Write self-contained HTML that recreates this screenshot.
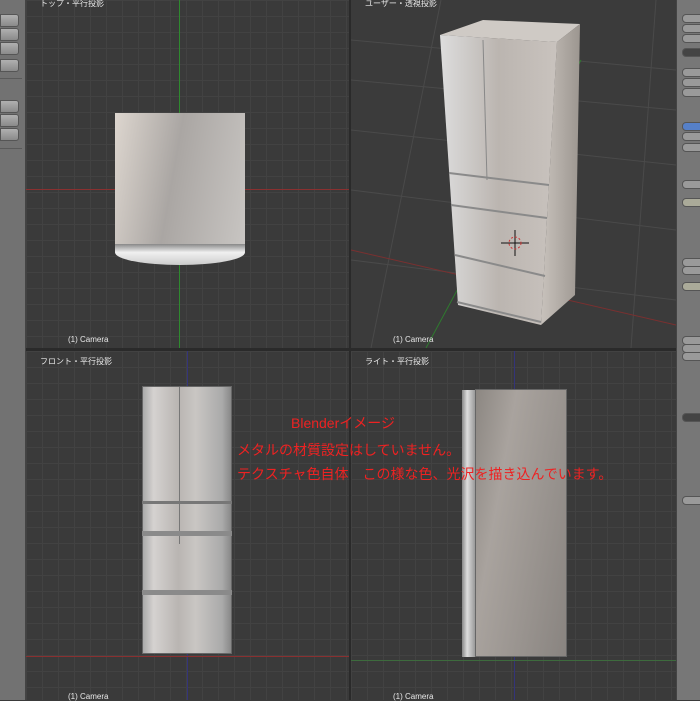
<!DOCTYPE html>
<html><head><meta charset="utf-8"><style>
*{margin:0;padding:0;box-sizing:border-box}
body{width:700px;height:700px;overflow:hidden;background:#3a3a3a;position:relative;font-family:"Liberation Sans","Noto Sans CJK JP",sans-serif}
.vp{position:absolute;background-color:#3a3a3a;background-image:linear-gradient(#424242 1px,transparent 1px),linear-gradient(90deg,#424242 1px,transparent 1px);background-size:16px 16px;overflow:hidden}
.lbl{position:absolute;color:#e8e8e8;font-size:8px}
.ln{position:absolute}
.red{position:absolute;color:#ee2222;font-size:14px;white-space:nowrap}
.btn{position:absolute;left:0;width:19px;height:13px;background:linear-gradient(#b0b0b0,#8a8a8a);border-radius:0 3px 3px 0;border:1px solid #555}
.rb{position:absolute;left:682px;width:20px;height:9px;background:#9a9a9a;border:1px solid #555;border-radius:4px 0 0 4px}
</style></head><body>
<div style="position:absolute;left:0;top:0;width:26px;height:700px;background:#727272;border-right:1px solid #444"></div>
<div class="btn" style="top:14px"></div><div class="btn" style="top:28px"></div><div class="btn" style="top:42px"></div><div class="btn" style="top:59px"></div>
<div class="btn" style="top:100px"></div><div class="btn" style="top:114px"></div><div class="btn" style="top:128px"></div>
<div style="position:absolute;left:0;top:78px;width:22px;height:1px;background:#5a5a5a"></div>
<div style="position:absolute;left:0;top:148px;width:22px;height:1px;background:#5a5a5a"></div>
<div class="vp" style="left:26px;top:0;width:323px;height:348px"></div>
<div class="vp" style="left:351px;top:0;width:325px;height:348px;background-image:none;background:#3b3b3b"></div>
<div class="vp" style="left:26px;top:351px;width:323px;height:349px"></div>
<div class="vp" style="left:351px;top:351px;width:325px;height:349px"></div>
<div style="position:absolute;left:349px;top:0;width:2px;height:700px;background:#2a2a2a"></div>
<div style="position:absolute;left:26px;top:348px;width:650px;height:3px;background:#2a2a2a"></div>
<div style="position:absolute;left:676px;top:0;width:24px;height:700px;background:#777;border-left:1px solid #444"></div>
<div class="rb" style="top:14px"></div><div class="rb" style="top:24px"></div><div class="rb" style="top:34px"></div><div class="rb" style="top:48px;background:#444"></div>
<div class="rb" style="top:68px"></div><div class="rb" style="top:78px"></div><div class="rb" style="top:88px"></div>
<div class="rb" style="top:122px;background:#5680c8"></div><div class="rb" style="top:132px"></div><div class="rb" style="top:143px"></div>
<div class="rb" style="top:180px"></div><div class="rb" style="top:198px;background:#aa9"></div>
<div class="rb" style="top:258px"></div><div class="rb" style="top:266px"></div><div class="rb" style="top:282px;background:#aa9"></div>
<div class="rb" style="top:336px"></div><div class="rb" style="top:344px"></div><div class="rb" style="top:352px"></div>
<div class="rb" style="top:413px;background:#444"></div><div class="rb" style="top:496px"></div>
<div class="ln" style="left:179px;top:0;width:1px;height:348px;background:#2f8a2f"></div>
<div class="ln" style="left:26px;top:189px;width:323px;height:1px;background:#8a3030"></div>
<div class="lbl" style="left:40px;top:-2px">トップ・平行投影</div>
<div style="position:absolute;left:115px;top:113px;width:130px;height:131px;background:linear-gradient(100deg,#ddd6cf,#aaa6a3 45%,#c8c5c2);"></div>
<div style="position:absolute;left:115px;top:244px;width:130px;height:21px;background:linear-gradient(#888,#f0f0f0 40%,#ccc);border-radius:0 0 50% 50%/0 0 60% 60%"></div>
<div class="lbl" style="left:68px;top:335px">(1) Camera</div>
<svg style="position:absolute;left:351px;top:0" width="325" height="348">
<defs>
<linearGradient id="g1" x1="0" x2="1"><stop offset="0" stop-color="#ddd"/><stop offset=".5" stop-color="#bbb5b0"/><stop offset="1" stop-color="#c9c3be"/></linearGradient>
<linearGradient id="g2" x1="0" x2="1"><stop offset="0" stop-color="#c8c2bc"/><stop offset="1" stop-color="#9c9690"/></linearGradient>
</defs>
<g stroke="#4a4a4a" stroke-width="1" fill="none">
<line x1="0" y1="40" x2="325" y2="70"/><line x1="0" y1="80" x2="325" y2="110"/><line x1="0" y1="130" x2="325" y2="165"/><line x1="0" y1="190" x2="325" y2="230"/><line x1="0" y1="260" x2="325" y2="300"/>
<line x1="20" y1="348" x2="90" y2="0"/><line x1="280" y1="348" x2="305" y2="0"/>
</g>
<line x1="75" y1="348" x2="230" y2="60" stroke="#2f7a2f"/>
<line x1="0" y1="250" x2="325" y2="325" stroke="#7a3030"/>
<polygon points="89,35 132,20 229,24 206,42" fill="#cfcac5"/>
<polygon points="206,42 229,24 224,295 190,325" fill="url(#g2)"/>
<polygon points="89,35 206,42 190,325 107,305" fill="url(#g1)"/>
<line x1="132" y1="40" x2="136" y2="180" stroke="#888"/>
<g stroke="#8a8a8a" stroke-width="2"><line x1="98" y1="173" x2="198" y2="185"/><line x1="100" y1="205" x2="196" y2="218"/><line x1="104" y1="255" x2="194" y2="276"/><line x1="106" y1="302" x2="190" y2="322"/></g>
<g stroke="#111" stroke-width="1"><line x1="164" y1="230" x2="164" y2="256"/><line x1="150" y1="243" x2="178" y2="243"/></g>
<circle cx="164" cy="243" r="6" fill="none" stroke="#c33" stroke-dasharray="2 2"/>
</svg>
<div class="lbl" style="left:365px;top:-2px">ユーザー・透視投影</div>
<div class="lbl" style="left:393px;top:335px">(1) Camera</div>
<div class="ln" style="left:187px;top:351px;width:1px;height:349px;background:#34347a"></div>
<div class="ln" style="left:26px;top:656px;width:323px;height:1px;background:#8a3030"></div>
<div class="lbl" style="left:40px;top:356px">フロント・平行投影</div>
<div style="position:absolute;left:142px;top:386px;width:90px;height:268px;background:linear-gradient(90deg,#aaa,#d5d2d0 12%,#b9b5b2 40%,#c9c6c3 60%,#aaa 90%,#888);border:1px solid #666"></div>
<div style="position:absolute;left:179px;top:387px;width:1px;height:157px;background:#777"></div>
<div style="position:absolute;left:142px;top:501px;width:90px;height:3px;background:#777"></div>
<div style="position:absolute;left:142px;top:531px;width:90px;height:5px;background:#8a8a8a"></div>
<div style="position:absolute;left:142px;top:590px;width:90px;height:5px;background:#8a8a8a"></div>
<div class="lbl" style="left:68px;top:692px">(1) Camera</div>
<div class="ln" style="left:514px;top:351px;width:1px;height:349px;background:#34347a"></div>
<div class="ln" style="left:351px;top:660px;width:325px;height:1px;background:#3d6b3d"></div>
<div class="lbl" style="left:365px;top:356px">ライト・平行投影</div>
<div style="position:absolute;left:462px;top:390px;width:13px;height:267px;background:linear-gradient(90deg,#888,#ddd 40%,#999)"></div>
<div style="position:absolute;left:475px;top:389px;width:92px;height:268px;background:linear-gradient(100deg,#8c8782,#a9a39e 30%,#898480);border:1px solid #666"></div>
<div class="lbl" style="left:393px;top:692px">(1) Camera</div>
<div class="red" style="left:291px;top:413px">Blenderイメージ</div>
<div class="red" style="left:237px;top:440px">メタルの材質設定はしていません。</div>
<div class="red" style="left:237px;top:464px">テクスチャ色自体　この様な色、光沢を描き込んでいます。</div>
</body></html>
